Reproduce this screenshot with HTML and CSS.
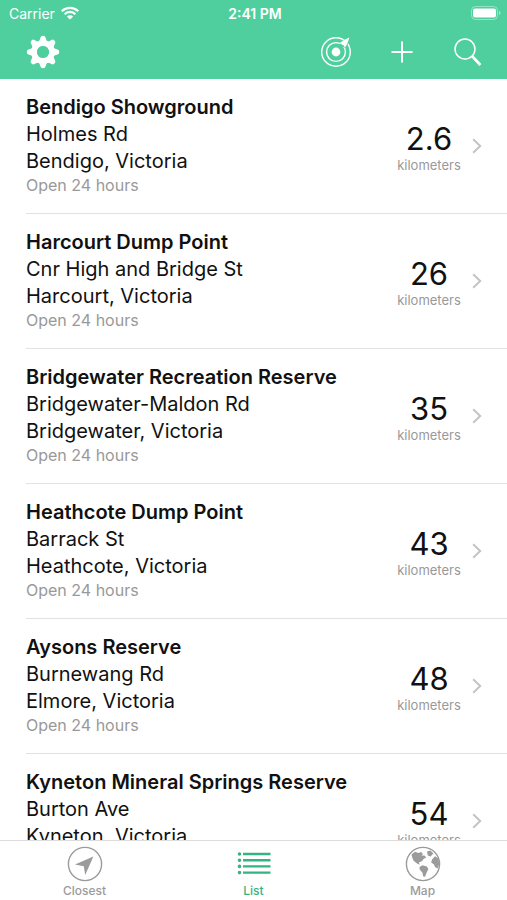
FILE: index.html
```html
<!DOCTYPE html>
<html lang="en">
<head>
    <meta charset="UTF-8">
    <meta name="viewport" content="width=device-width, initial-scale=1.0">
    <title>Dump Points</title>
    <link rel="stylesheet" href="styles.css">
</head>
<body>
    <header class="header">
        <div class="status">
            <div class="carrier">
                <span>Carrier</span>
                <svg width="18" height="14" viewBox="0 0 18 14" fill="none" stroke="#fff" stroke-width="2.2">
                    <path d="M0.8 5.2a11.6 11.6 0 0 1 16.4 0"/>
                    <path d="M3.6 8.2a7.6 7.6 0 0 1 10.8 0"/>
                    <path d="M9 13.6L5.9 10.5a4.4 4.4 0 0 1 6.2 0z" fill="#fff" stroke="none"/>
                </svg>
            </div>
            <span class="time">2:41 PM</span>
            <svg class="battery" width="30" height="14" viewBox="0 0 30 14">
                <rect x="0.5" y="0.5" width="26" height="13" rx="4" fill="none" stroke="#fff" stroke-opacity="0.4"/>
                <rect x="2" y="2.5" width="23" height="9" rx="2" fill="#fff"/>
                <path d="M28 5v4q1.6-.6 1.6-2T28 5z" fill="#fff" fill-opacity="0.5"/>
            </svg>
        </div>
        <nav class="toolbar">
            <button type="button" class="tool" aria-label="Settings">
                <svg width="34" height="34" viewBox="-17 -17 34 34" fill="#fff">
                    <defs>
                        <path id="tooth" d="M-4.8-10Q-3-12-2.5-14.6Q-2.2-16.2 0-16.2T2.5-14.6Q3-12 4.8-10z"/>
                    </defs>
                    <use href="#tooth"/>
                    <use href="#tooth" transform="rotate(45)"/>
                    <use href="#tooth" transform="rotate(90)"/>
                    <use href="#tooth" transform="rotate(135)"/>
                    <use href="#tooth" transform="rotate(180)"/>
                    <use href="#tooth" transform="rotate(225)"/>
                    <use href="#tooth" transform="rotate(270)"/>
                    <use href="#tooth" transform="rotate(315)"/>
                    <circle r="8.8" fill="none" stroke="#fff" stroke-width="5.6"/>
                    <circle r="6" fill="#50cf9e"/>
                </svg>
            </button>
            <div class="actions">
                <button type="button" class="tool" aria-label="Locate">
                    <svg width="34" height="34" viewBox="-17 -17 34 34" fill="none" stroke="#fff" stroke-width="1.4">
                        <circle r="14.3"/>
                        <circle r="9.4"/>
                        <path d="M4-7.4L9.6-11.6 13.2-14.4 12.4-10.6 9-5.2z" stroke="#50cf9e" stroke-width="2"/>
                        <circle r="4.4" fill="#fff" stroke="none"/>
                        <path d="M3.4-8.8L8-12 13.4-14.4 11.4-8.6 9-4.2 7.6-6.8z" fill="#fff" stroke="none"/>
                    </svg>
                </button>
                <button type="button" class="tool" aria-label="Add">
                    <svg width="34" height="34" viewBox="-17 -17 34 34" fill="none" stroke="#fff" stroke-width="2">
                        <path d="M0-10.5v21M-10.5 0h21"/>
                    </svg>
                </button>
                <button type="button" class="tool" aria-label="Search">
                    <svg width="34" height="34" viewBox="-17 -17 34 34" fill="none" stroke="#fff">
                        <circle cx="-3" cy="-3" r="10" stroke-width="1.5"/>
                        <path d="M4 4l8.4 9" stroke-width="2.6"/>
                    </svg>
                </button>
            </div>
        </nav>
    </header>

    <main class="list">
        <a class="row" href="#">
            <div class="place">
                <h2 class="name">Bendigo Showground</h2>
                <p class="address">Holmes Rd</p>
                <p class="address">Bendigo, Victoria</p>
                <p class="hours">Open 24 hours</p>
            </div>
            <div class="distance"><span class="number">2.6</span><span class="unit">kilometers</span></div>
            <svg class="chevron" width="10" height="16" viewBox="0 0 10 16"><path d="M1.2 1.2L8.2 8l-7 6.8"/></svg>
        </a>
        <a class="row" href="#">
            <div class="place">
                <h2 class="name">Harcourt Dump Point</h2>
                <p class="address">Cnr High and Bridge St</p>
                <p class="address">Harcourt, Victoria</p>
                <p class="hours">Open 24 hours</p>
            </div>
            <div class="distance"><span class="number">26</span><span class="unit">kilometers</span></div>
            <svg class="chevron" width="10" height="16" viewBox="0 0 10 16"><path d="M1.2 1.2L8.2 8l-7 6.8"/></svg>
        </a>
        <a class="row" href="#">
            <div class="place">
                <h2 class="name">Bridgewater Recreation Reserve</h2>
                <p class="address">Bridgewater-Maldon Rd</p>
                <p class="address">Bridgewater, Victoria</p>
                <p class="hours">Open 24 hours</p>
            </div>
            <div class="distance"><span class="number">35</span><span class="unit">kilometers</span></div>
            <svg class="chevron" width="10" height="16" viewBox="0 0 10 16"><path d="M1.2 1.2L8.2 8l-7 6.8"/></svg>
        </a>
        <a class="row" href="#">
            <div class="place">
                <h2 class="name">Heathcote Dump Point</h2>
                <p class="address">Barrack St</p>
                <p class="address">Heathcote, Victoria</p>
                <p class="hours">Open 24 hours</p>
            </div>
            <div class="distance"><span class="number">43</span><span class="unit">kilometers</span></div>
            <svg class="chevron" width="10" height="16" viewBox="0 0 10 16"><path d="M1.2 1.2L8.2 8l-7 6.8"/></svg>
        </a>
        <a class="row" href="#">
            <div class="place">
                <h2 class="name">Aysons Reserve</h2>
                <p class="address">Burnewang Rd</p>
                <p class="address">Elmore, Victoria</p>
                <p class="hours">Open 24 hours</p>
            </div>
            <div class="distance"><span class="number">48</span><span class="unit">kilometers</span></div>
            <svg class="chevron" width="10" height="16" viewBox="0 0 10 16"><path d="M1.2 1.2L8.2 8l-7 6.8"/></svg>
        </a>
        <a class="row" href="#">
            <div class="place">
                <h2 class="name">Kyneton Mineral Springs Reserve</h2>
                <p class="address">Burton Ave</p>
                <p class="address">Kyneton, Victoria</p>
                <p class="hours">Open 24 hours</p>
            </div>
            <div class="distance"><span class="number">54</span><span class="unit">kilometers</span></div>
            <svg class="chevron" width="10" height="16" viewBox="0 0 10 16"><path d="M1.2 1.2L8.2 8l-7 6.8"/></svg>
        </a>
    </main>

    <nav class="tabs">
        <a class="tab" href="#">
            <svg width="36" height="36" viewBox="-18 -18 36 36">
                <circle r="16.6" fill="none" stroke="#9b9b9b" stroke-width="1.4"/>
                <path d="M8.4-7.6L-10 .4-1.2 2.2.2 11z" fill="#9b9b9b"/>
            </svg>
            <span>Closest</span>
        </a>
        <a class="tab active" href="#">
            <svg width="36" height="36" viewBox="-18 -18 36 36" fill="none" stroke="#34b485" stroke-width="2.4">
                <path d="M-11-10H16.5M-11-3.8H16.5M-11 2.4H16.5M-11 8.6H16.5"/>
                <path d="M-14.5-10h.01M-14.5-3.8h.01M-14.5 2.4h.01M-14.5 8.6h.01" stroke-width="3.6" stroke-linecap="round"/>
            </svg>
            <span>List</span>
        </a>
        <a class="tab" href="#">
            <svg width="36" height="36" viewBox="-18 -18 36 36" fill="#9b9b9b">
                <circle r="16.6" fill="none" stroke="#9b9b9b" stroke-width="1.4"/>
                <path d="M-11.5-9.5L-8-12.2-4.5-11-2-12 0-10-1.5-8.5 1.5-8.5 3.2-6.5.5-5-1-2.8-4-1.8-3.4.8-6-.6-9.4-3.2-10.6-6z"/>
                <path d="M-3.6 3L-.4 1.2 3.8 2.4 5.4 5 3.8 8.2 2 12.8.2 12.6-.6 8.6-3.2 5.8z"/>
                <path d="M4-12.4L7.4-13.6 10.4-10.4 7.6-7.4 4.8-8.6z"/>
                <path d="M9-4.4L12-7.8 15.4-5.4 16.2 0 14.8 4.6 12 3 11 .4 8.2-1.4z"/>
            </svg>
            <span>Map</span>
        </a>
    </nav>
</body>
</html>
```
FILE: styles.css
```css
* {
    box-sizing: border-box;
}
body {
    font-family: Inter, "Liberation Sans", sans-serif;
    background-color: #fff;
    color: #111;
    margin: 0;
    height: 100vh;
    display: flex;
    flex-direction: column;
}
a {
    color: inherit;
    text-decoration: none;
}
svg {
    display: block;
    flex: none;
}
.header {
    background-color: #50cf9e;
    color: #fff;
    flex: none;
}
.status {
    display: grid;
    grid-template-columns: 1fr auto 1fr;
    align-items: center;
    height: 26px;
    padding: 0 6px 0 9px;
    font-size: 14px;
}
.carrier {
    display: flex;
    align-items: center;
    gap: 6px;
}
.time {
    font-weight: 600;
}
.battery {
    justify-self: end;
}
.toolbar {
    display: flex;
    justify-content: space-between;
    align-items: center;
    height: 53px;
    padding: 0 22px 1px 26px;
}
.actions {
    display: flex;
    gap: 32px;
}
.tool {
    padding: 0;
    border: none;
    background: none;
    cursor: pointer;
}
.list {
    flex: 1;
    min-height: 0;
    overflow-y: auto;
    scrollbar-width: none;
}
.row {
    display: flex;
    align-items: center;
    margin-left: 26px;
    padding: 15px 25px 16px 0;
    border-bottom: 1px solid #e2e2e2;
}
.place {
    flex: 1;
    padding-bottom: 2px;
}
.name, .address, .hours {
    margin: 0;
    font-size: 20px;
    line-height: 27px;
    font-weight: 400;
}
.name {
    font-weight: 600;
}
.hours {
    font-size: 16px;
    line-height: 20px;
    color: #999;
}
.distance {
    width: 72px;
    margin-right: 7px;
    padding-top: 4px;
    text-align: center;
}
.number {
    display: block;
    font-size: 31px;
    line-height: 34px;
}
.unit {
    display: block;
    font-size: 13px;
    line-height: 18px;
    color: #999;
}
.chevron path {
    fill: none;
    stroke: #c4c4c4;
    stroke-width: 2;
}
.tabs {
    display: grid;
    grid-template-columns: repeat(3, 1fr);
    flex: none;
    height: 60px;
    border-top: 1px solid #dcdcdc;
    background-color: #fff;
}
.tab {
    display: flex;
    flex-direction: column;
    align-items: center;
    padding-top: 5px;
    font-size: 12px;
    line-height: 18px;
    font-weight: 500;
    color: #9b9b9b;
}
.active {
    color: #34b485;
}
```
